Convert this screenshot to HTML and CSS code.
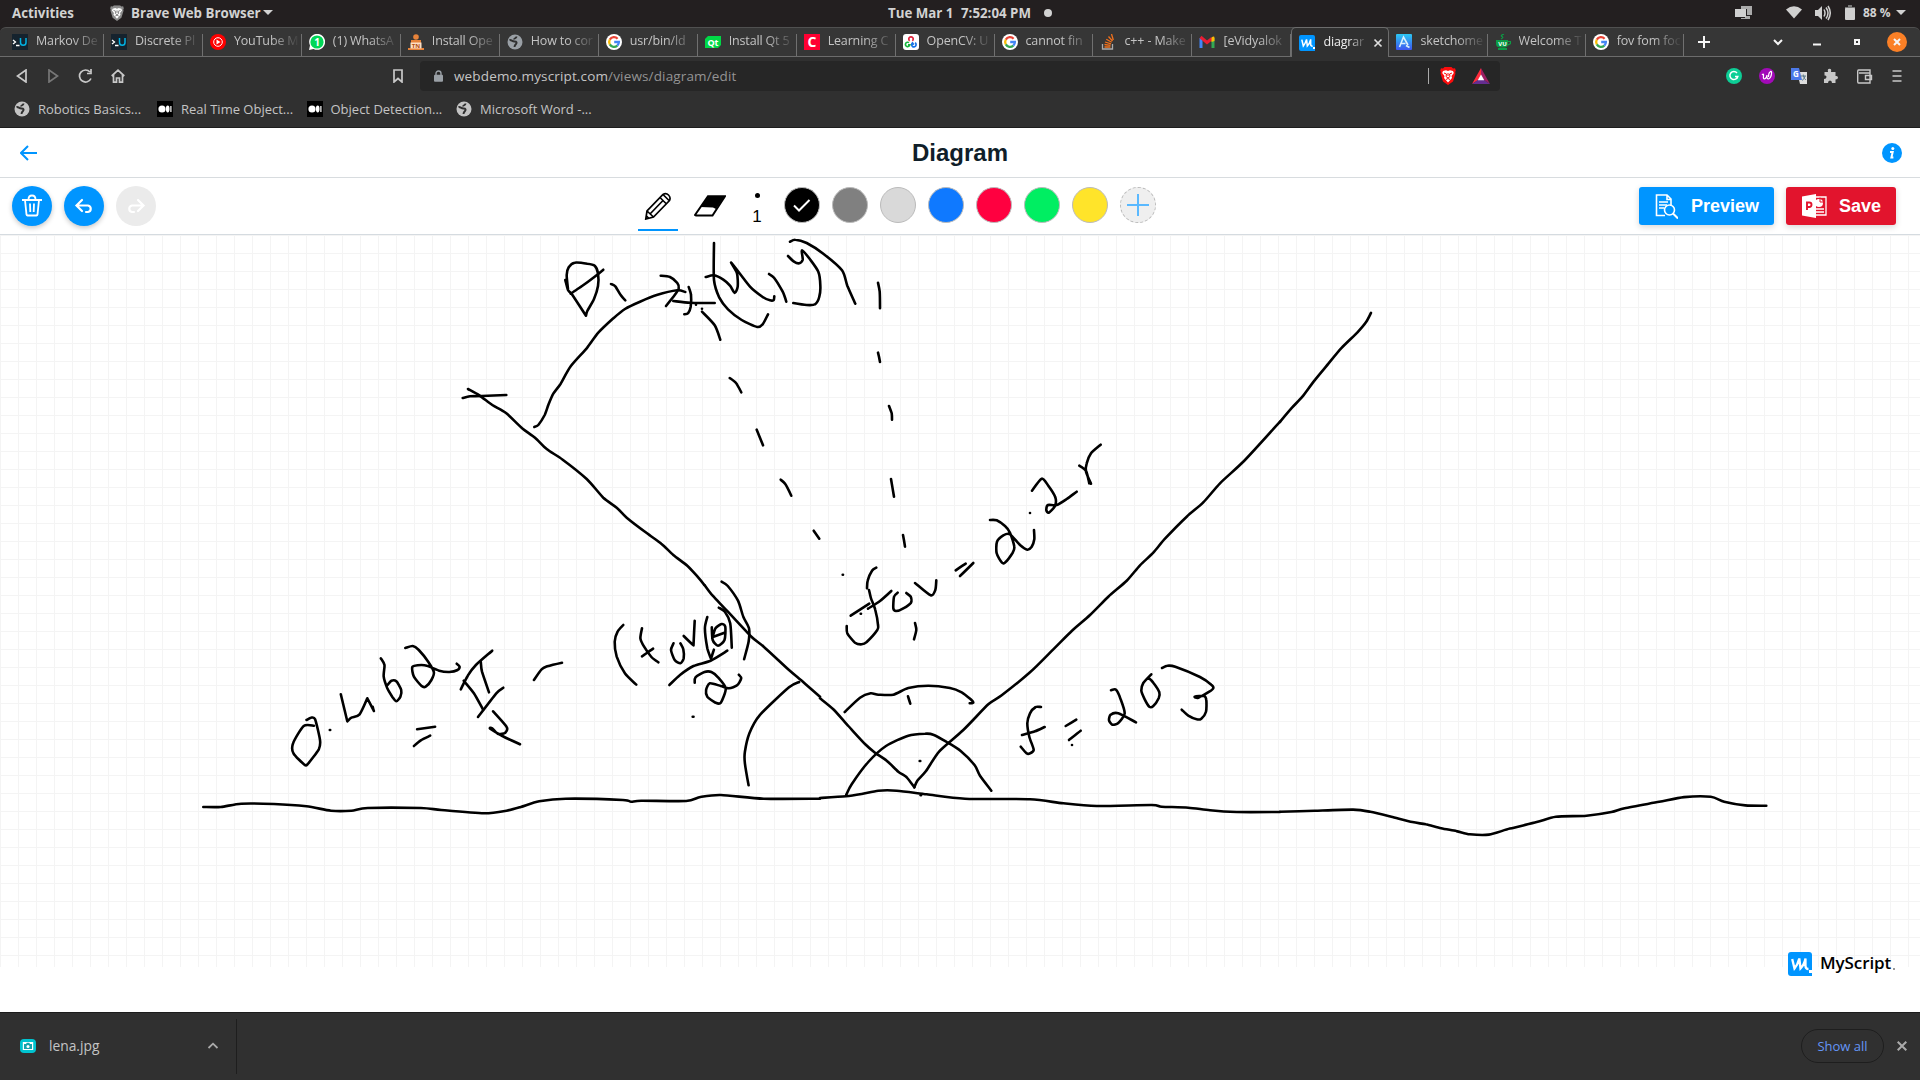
FILE: index.html
```html
<!DOCTYPE html>
<html lang="en">
<head>
<meta charset="utf-8">
<title>diagram</title>
<link rel="stylesheet" href="styles.css">
</head>
<body>
<svg class="defs" width="0" height="0" aria-hidden="true">
  <symbol id="google" viewBox="0 0 16 16"><circle cx="8" cy="8" r="8" fill="#fff"/><g fill="none" stroke-width="2.3"><path d="M11.6 4.7A4.9 4.9 0 0 0 3.8 5.6" stroke="#ea4335"/><path d="M3.8 5.6a4.9 4.9 0 0 0 0 4.8" stroke="#fbbc05"/><path d="M3.8 10.4a4.9 4.9 0 0 0 7.5 1.2" stroke="#34a853"/><path d="M11.3 11.6A4.9 4.9 0 0 0 12.9 8H8.2" stroke="#4285f4"/></g></symbol>
  <symbol id="globe" viewBox="0 0 16 16"><circle cx="8" cy="8" r="7.5" fill="currentColor"/><path d="M2.500 6c2-.5 2.500 1.500 5 1.500s2.500 1.500 1.500 2.500-1.500 1.500-1.500 3M9.500 2.500c0 2-2.500 1.500-2.500 3" fill="none" stroke="#303030" stroke-width="1.900"/></symbol>
  <symbol id="medium" viewBox="0 0 16 16"><path fill="#000" d="M0 0h16v16H0z"/><circle cx="5" cy="8" r="3.600" fill="#fff"/><ellipse cx="10.700" cy="8" rx="1.800" ry="3.400" fill="#fff"/><path d="M13.900 5v6" stroke="#fff" stroke-width="1.200"/></symbol>
  <symbol id="udacity" viewBox="0 0 16 16"><path fill="#15232e" d="M0 0h16v16H0z"/><path d="M1 6l2.500 2L1 10M4 11.500h3.500" fill="none" stroke="#fff" stroke-width="1.300"/><path d="M8.500 4v4.500a2.700 2.700 0 0 0 5.500 0V4" fill="none" stroke="#02b3e4" stroke-width="1.500"/></symbol>
  <symbol id="myscript" viewBox="0 0 24 24"><path fill="#0095ff" d="M3 0h18q3 0 3 3v21H3q-3 0-3-3V3q0-3 3-3z"/><path d="M4.200 7L6.500 16.500Q9.500 13 11.300 6.500L12.500 16.500Q16 13 17.500 6.500V14Q17.500 17 20.500 17" fill="none" stroke="#fff" stroke-width="2.300"/><path fill="#fff" d="M21 18h3v3h-3z"/></symbol>
  <symbol id="lion" viewBox="0 0 16 18"><path fill="currentColor" d="M4.500 0h7L13 1.500l2-.3.800 2.300-.600 1.500.300 1.500-2.500 8L8 18l-5-3.500-2.500-8L.8 5 .2 3.500 1 1.200l2 .3z"/><path fill="#fff" d="M3 4l3-.700L8 4l2-.7 3 .7.800 2-2.300 3 .5 2L8 15.500 4 11l.5-2-2.300-3z"/><path fill="none" stroke="var(--face)" stroke-width="1" d="M4 6l2.500 1-.5 2.500L8 11l2-1.500L9.500 7 12 6M8 6v3M6 12.500l2-1 2 1"/></symbol>
</svg>

<header class="system">
  <span class="activities">Activities</span>
  <svg class="sys-lion" viewBox="0 0 16 18"><use href="#lion"/></svg>
  <span class="app">Brave Web Browser</span>
  <i class="caret"></i>
  <span class="date">Tue Mar 1</span><span class="time">7:52:04 PM</span><i class="dot"></i>
  <div class="status">
    <svg width="17" height="14" viewBox="0 0 17 14"><path fill="#aaa" d="M6 0h11v9h-5V3H6zM10 10h5v3H6v-1h4z"/><path fill="#d0d0d0" d="M0 3h11v8H0z"/></svg>
    <svg width="16" height="13" viewBox="0 0 16 13"><path fill="#d0d0d0" d="M8 12.500L0 3.500Q8-3 16 3.500z"/></svg>
    <svg width="16" height="16" viewBox="0 0 16 16"><path fill="#d0d0d0" d="M0 5h3l4-4v14l-4-4H0z"/><path fill="none" stroke="#d0d0d0" stroke-width="1.500" d="M9 4.500q2 3.500 0 7M11 2.500q4 5.500 0 11M13 1q4.500 7 0 14"/></svg>
    <svg width="10" height="15" viewBox="0 0 10 15"><path fill="#777" d="M3 0h4v2h3v3H0V2h3z"/><rect y="3" width="10" height="12" rx="1" fill="#d0d0d0"/></svg>
    <span class="pct">88 %</span><i class="caret"></i>
  </div>
</header>

<nav class="tabs">
  <div class="tab"><svg><use href="#udacity"/></svg><span>Markov De</span></div>
  <div class="tab"><svg><use href="#udacity"/></svg><span>Discrete Pl</span></div>
  <div class="tab"><svg viewBox="0 0 16 16"><circle cx="8" cy="8" r="8" fill="#f00"/><circle cx="8" cy="8" r="4.300" fill="none" stroke="#fff"/><path fill="#fff" d="M6.500 5.500L10.500 8l-4 2.500z"/></svg><span>YouTube M</span></div>
  <div class="tab"><svg viewBox="0 0 16 16"><path fill="#fff" d="M0 16l1-4.500A8 8 0 1 1 4.500 15z"/><circle cx="8" cy="8" r="6.600" fill="#00d757"/><text x="8" y="11.500" text-anchor="middle" class="fav" font-size="10">1</text></svg><span>(1) WhatsA</span></div>
  <div class="tab"><svg viewBox="0 0 16 16"><circle cx="8" cy="3" r="2.800" fill="#e8833a"/><path fill="#e8833a" d="M3 6h10v8h3v2H0v-2h3z"/><path fill="#ffdfc5" d="M2.500 8.500h11v6h-11z"/><text x="8" y="14" text-anchor="middle" font-size="6" class="fav tn">TN</text></svg><span>Install Ope</span></div>
  <div class="tab"><svg class="gray"><use href="#globe"/></svg><span>How to cor</span></div>
  <div class="tab"><svg><use href="#google"/></svg><span>usr/bin/ld</span></div>
  <div class="tab"><svg viewBox="0 0 16 16"><path fill="#00d946" d="M3 2h13v9l-3 3H0V5z"/><text x="8" y="11.500" text-anchor="middle" font-size="9" class="fav">Qt</text></svg><span>Install Qt 5</span></div>
  <div class="tab"><svg viewBox="0 0 16 16"><path fill="#ff0032" d="M0 0h16v16H0z"/><text x="8" y="13" text-anchor="middle" font-size="14" class="fav">C</text></svg><span>Learning C</span></div>
  <div class="tab"><svg viewBox="0 0 16 16"><rect width="16" height="16" rx="3" fill="#fff"/><g fill="none" stroke-width="1.700"><path d="M6.700 6.800a2.200 2.200 0 1 1 2.600 0" stroke="#e0213a"/><path d="M6 8.700a2.200 2.200 0 1 0 .8 2.200H5" stroke="#15b53c"/><path d="M12 8.800a2.200 2.200 0 1 1-2.500.2l1.200 1.800" stroke="#1673e6"/></g></svg><span>OpenCV: U</span></div>
  <div class="tab"><svg><use href="#google"/></svg><span>cannot fin</span></div>
  <div class="tab"><svg viewBox="0 0 16 16"><path fill="none" stroke="#aaa" stroke-width="1.300" d="M2.500 10v5h10v-5"/><path fill="none" stroke="#f2711c" stroke-width="1.300" d="M4.500 13h6M4.500 10.500l6 .8M5 8l6 1.800M6.300 5.200l5.400 3M8.500 2.500l4 4.500M11.500 0l1.800 6"/></svg><span>c++ - Make</span></div>
  <div class="tab"><svg viewBox="0 0 16 16"><path fill="none" stroke="#4285f4" stroke-width="3" d="M2 14V4"/><path fill="none" stroke="#34a853" stroke-width="3" d="M14 14V4"/><path fill="none" stroke="#ea1d33" stroke-width="3" d="M1.500 3L8 8.500 13 4.500"/><path fill="#fbbc04" d="M12.500 3.500Q15.500 1.500 15.500 4v3l-3 1z"/></svg><span>[eVidyalok</span></div>
  <div class="tab active"><svg><use href="#myscript"/></svg><span>diagrar</span><svg class="x" viewBox="0 0 10 10"><path d="M1.500 1.500l7 7M8.500 1.500l-7 7"/></svg></div>
  <div class="tab narrow"><svg viewBox="0 0 16 16"><defs><linearGradient id="sk" x2="0" y2="1"><stop stop-color="#2cc8f2"/><stop offset="1" stop-color="#3d55f0"/></linearGradient></defs><rect width="16" height="16" rx="1" fill="url(#sk)"/><path d="M3.500 13L7.500 3l4.500 8M5 9.500h4.500M10 11.500l3.500 2" stroke="#d9eefc" fill="none" stroke-width="1.600"/></svg><span>sketchome</span></div>
  <div class="tab narrow"><svg viewBox="0 0 16 16"><path fill="#0c9c45" d="M1 6h12v4q0 3-3 3.500H5Q1 13 1 10zM3 14h9v2H3z"/><path d="M13 7.500h2.500v2L13 11M6 5q3-1.500 1-2.500T9 0" fill="none" stroke="#0c9c45" stroke-width="1.200"/><text x="7.500" y="11.500" text-anchor="middle" font-size="6" class="fav">VU</text></svg><span>Welcome T</span></div>
  <div class="tab narrow"><svg><use href="#google"/></svg><span>fov fom foc</span></div>
  <div class="controls">
    <svg width="12" height="12" viewBox="0 0 12 12"><path d="M6 0v12M0 6h12"/></svg>
    <svg width="10" height="8" viewBox="0 0 10 8"><path d="M1 2l4 4 4-4"/></svg>
    <svg width="8" height="12" viewBox="0 0 8 12"><path d="M0 8.500h8"/></svg>
    <svg width="6" height="6" viewBox="0 0 6 6"><path d="M1 1h4v4H1z"/></svg>
    <svg width="20" height="20" viewBox="0 0 20 20"><circle cx="10" cy="10" r="10" fill="#fb8026"/><path d="M7 7l6 6M13 7l-6 6"/></svg>
  </div>
</nav>

<div class="nav">
  <div class="nav-left">
    <svg width="12" height="14" viewBox="0 0 12 14"><path d="M10 1v12L1.500 7z"/></svg>
    <svg class="dim" width="12" height="14" viewBox="0 0 12 14"><path d="M2 1v12l8.500-6z"/></svg>
    <svg width="14" height="14" viewBox="0 0 14 14"><path d="M13 9.500A6 6 0 1 1 12 3M9 4.500h4V0"/></svg>
    <svg width="14" height="14" viewBox="0 0 14 14"><path d="M.7 7L7 1.200 13.300 7M2.500 6v7.200h3V9h3v4.200h3V6"/></svg>
  </div>
  <svg class="bm" width="10" height="14" viewBox="0 0 10 14"><path d="M1 1h8v12L5 9.500 1 13z"/></svg>
  <div class="url">
    <svg width="9" height="12" viewBox="0 0 9 12"><path d="M2 5V3.500a2.500 2.500 0 0 1 5 0V5" fill="none" stroke="#9aa0a6" stroke-width="1.400"/><rect y="4.700" width="9" height="7" rx="1" fill="#9aa0a6"/></svg>
    <span class="addr"><b>webdemo.myscript.com</b>/views/diagram/edit</span>
    <i class="sep"></i>
    <svg class="red" width="16" height="18"><use href="#lion"/></svg>
    <svg width="18" height="16" viewBox="0 0 18 16"><path fill="#ff2c3c" d="M9 0L0 16l9-6z"/><path fill="#9e1f63" d="M9 0l9 16-9-6z"/><path fill="#662d91" d="M0 16h18l-9-6z"/><path fill="#fff" d="M9 6.500l3.300 5.800H5.700z"/></svg>
  </div>
  <div class="ext">
    <svg viewBox="0 0 16 16"><circle cx="8" cy="8" r="8" fill="#0dce96"/><path d="M11 5a4 4 0 1 0 .8 3.500H9" fill="none" stroke="#fff" stroke-width="1.500"/></svg>
    <svg viewBox="0 0 16 16"><circle cx="8" cy="8" r="8" fill="#a20ab8"/><path d="M3 7q2-2 1.500 1T5.500 11q2-.5 2.500-4-.5 4 1.500 4Q12 10 12.500 6T11 4Q9.500 5 9.500 9" fill="none" stroke="#fff" stroke-width="1.200"/></svg>
    <svg viewBox="0 0 16 16"><path fill="#ddd" d="M6 4h10v12H9z"/><path fill="#4c79e8" d="M0 0h8l3 12H0z"/><text x="4.800" y="8.500" text-anchor="middle" font-size="8" class="fav">G</text><path d="M9.500 8H15M12.300 6.500V8q1.500 3.500 2.500 4M14 8q-.5 3-3 4.500" fill="none" stroke="#607d8b"/></svg>
    <svg viewBox="0 0 16 16"><path fill="#c8c8c8" d="M.5 4H4Q3.200.7 5.500.7T7 4h4.500v4q2.500-.5 2.500 1.500t-2.500 2V15H8q0-2.500-2-2.500T4 15H0v-4q2.500 0 2.500-2T.5 7.500z"/></svg>
    <svg viewBox="0 0 16 16"><path d="M13 4.500V2H1.500Q.7 2 .7 3.500v10Q.7 15 1.500 15H13V5H2M14.500 7.500H8.500v4h6z" fill="none" stroke="#c8c8c8" stroke-width="1.400"/></svg>
    <svg viewBox="0 0 16 16"><path d="M3.500 3h9M3.500 8h9M3.500 13h9" stroke="#c8c8c8" stroke-width="1.500"/></svg>
  </div>
</div>

<div class="bookmarks">
  <a><svg><use href="#globe"/></svg>Robotics Basics...</a>
  <a><svg><use href="#medium"/></svg>Real Time Object...</a>
  <a><svg><use href="#medium"/></svg>Object Detection...</a>
  <a><svg><use href="#globe"/></svg>Microsoft Word -...</a>
</div>

<main>
  <div class="title">
    <svg width="18" height="16" viewBox="0 0 18 16"><path d="M17 8H1M8 1L1 8l7 7" fill="none" stroke="#0095ff" stroke-width="2"/></svg>
    <h1>Diagram</h1>
    <svg width="20" height="20" viewBox="0 0 20 20"><circle cx="10" cy="10" r="10" fill="#0095ff"/><circle cx="10.800" cy="5.600" r="1.500" fill="#fff"/><path d="M8 9h2.700L9.400 14.600h2" fill="none" stroke="#fff" stroke-width="2"/></svg>
  </div>
  <div class="tools">
    <div class="history">
      <button class="round"><svg viewBox="0 0 40 40"><path d="M10 14h20M16.500 13.500q0-4 3.500-4t3.500 4M13 14l1.500 14.500q.2 1 1 1h9q.8 0 1-1L27 14M18 17.500l.3 8.500M22 17.500l-.3 8.500" fill="none" stroke="#fff" stroke-width="1.800"/></svg></button>
      <button class="round"><svg viewBox="0 0 40 40"><path d="M18 14l-5.500 5.500L18 25M13 19.500h11a3.300 3.300 0 0 1 0 6.500h-2" fill="none" stroke="#fff" stroke-width="2.200" stroke-linecap="round"/></svg></button>
      <button class="round off"><svg viewBox="0 0 40 40"><path d="M22 14l5.500 5.500L22 25M27 19.500H16a3.300 3.300 0 0 0 0 6.500h2" fill="none" stroke="#fff" stroke-width="2.200" stroke-linecap="round"/></svg></button>
    </div>
    <div class="pens">
      <div class="pen"><svg width="28" height="28" viewBox="0 0 28 28"><path d="M1.800 27l1.200-8L19 2.500q3-2 5.500.5T25.500 8.500L9.500 25zM3 19l6.500 6M16 5.500l6 6M6 22L19.500 8M19 2.500l6 6M2.500 24l2.500 2.500" fill="none" stroke="#000" stroke-width="1.700"/></svg></div>
      <svg class="eraser" width="32" height="22" viewBox="0 0 32 22"><path d="M1 20L14 1.200h17L18.500 20.500H2z" fill="#fff" stroke="#000" stroke-width="2"/><path d="M6.500 12L14 1h17l-9 13-3-1.500z"/></svg>
      <div class="size"><i></i><span>1</span></div>
      <div class="swatches">
        <i class="c-black"><svg viewBox="0 0 34 34"><path d="M9 17.500l5 5L24.500 12" fill="none" stroke="#fff" stroke-width="2"/></svg></i><i class="c-gray"></i><i class="c-light"></i><i class="c-blue"></i><i class="c-red"></i><i class="c-green"></i><i class="c-yellow"></i><i class="c-add"><svg viewBox="0 0 34 34"><path d="M17 6v22M6 17h22" stroke="#5ab9ff" stroke-width="2"/></svg></i>
      </div>
    </div>
    <div class="actions">
      <button class="btn preview"><svg width="24" height="26" viewBox="0 0 24 26"><path d="M11 22.500H2.500V2H13l4 4v7M13 2v4.500h4M5 9h9M5 12h8M5 15h5" fill="none" stroke="#fff" stroke-width="1.600"/><circle cx="15.500" cy="17" r="5" fill="none" stroke="#fff" stroke-width="1.600"/><path d="M19 20.500l5 5" stroke="#fff" stroke-width="2"/></svg><span>Preview</span></button>
      <button class="btn save"><svg width="25" height="24" viewBox="0 0 25 24"><path d="M12 3h12v18H12M14 15h8M14 18h8" fill="none" stroke="#fff" stroke-width="1.300"/><circle cx="17" cy="9" r="4" fill="#fff"/><path d="M18 3.500V8h4.500" stroke="#e2142d" fill="none"/><path fill="#fff" d="M0 2.500L14 0v24L0 21.500z"/><path d="M5 16V8.500h2.200q2.300 0 2.300 2.200T7.200 13H5" fill="none" stroke="#e2142d" stroke-width="1.900"/></svg><span>Save</span></button>
    </div>
  </div>
  <section class="canvas">
    <svg id="ink" viewBox="0 235 1920 732" width="1920" height="732"></svg>
  </section>
  <footer class="brand"><svg width="24" height="24"><use href="#myscript"/></svg><span>MyScript</span><i></i></footer>
</main>

<div class="shelf">
  <div class="file">
    <svg width="16" height="14" viewBox="0 0 16 14"><rect width="16" height="14" rx="4" fill="#00c3cf"/><rect x="2.800" y="3" width="10.400" height="8" fill="#fff"/><path fill="#16a3ad" d="M4 5h2l.8-1.300h2.500L10 5h2v5H4z"/><circle cx="8" cy="7.500" r="1.500" fill="#fff"/></svg>
    <span>lena.jpg</span>
    <svg width="12" height="8" viewBox="0 0 12 8"><path d="M1.500 6L6 1.700 10.500 6" fill="none" stroke="#aaa" stroke-width="1.800"/></svg>
  </div>
  <div class="shelf-right"><button class="all">Show all</button><svg width="10" height="10" viewBox="0 0 10 10"><path d="M.7.7l8.600 8.600M9.300.7L.7 9.300" stroke="#aaa" stroke-width="2"/></svg></div>
</div>
<script src="ink.js"></script>
</body>
</html>
```
FILE: styles.css
```css
* { box-sizing: border-box; }
body { margin: 0; width: 1920px; height: 1080px; overflow: hidden; display: flex; flex-direction: column; background: #fff; color: #c4c4c4; font: 13px/16px "Open Sans", "Noto Sans", sans-serif; }
svg { flex: none; display: block; }
button { border: 0; padding: 0; font: inherit; }
.defs { position: absolute; }
i { display: block; flex: none; }

.system { height: 27px; flex: none; background: #231f20; display: flex; align-items: center; padding: 0 14px 2px 12px; font-weight: 700; color: #d2d2d2; white-space: nowrap; font-size: 13.300px; }
.activities { width: 98px; }
.sys-lion { width: 14px; height: 16px; color: #8b8b8b; --face: #777; margin-right: 7px; }
.app { width: 132px; }
.caret { border: 5px solid transparent; border-top-color: #d2d2d2; border-bottom: 0; }
.date { margin-left: 615px; width: 73px; }
.time { width: 83px; }
.dot { width: 8px; height: 8px; border-radius: 50%; background: #d2d2d2; }
.status { margin-left: auto; display: flex; align-items: center; }
.status svg:nth-child(1) { margin-right: 34px; }
.status svg:nth-child(2) { margin-right: 13px; }
.status svg:nth-child(3) { margin-right: 14px; }
.status svg:nth-child(4) { margin-right: 8px; }
.pct { width: 33px; font-size: 12px; }

.tabs { height: 30px; flex: none; background: #363636; border-top: 1px solid #505050; border-bottom: 1px solid #6c6c6c; display: flex; padding-left: 5px; border-radius: 6px 6px 0 0; box-shadow: 0 -6px 0 #231f20; }
.tab { width: 98.960px; flex: none; display: flex; align-items: center; padding: 0 2px 0 7px; position: relative; font-size: 12.500px; letter-spacing: -.15px; }
.tab.narrow { width: 98.100px; }
.tab::after { content: ""; position: absolute; right: 0; top: 6px; bottom: 0; width: 1px; background: #707070; }
.tab svg { width: 16px; height: 16px; margin-right: 8px; }
.tab span { flex: 1; overflow: hidden; white-space: nowrap; margin-top: -2px; -webkit-mask-image: linear-gradient(90deg, #000 55%, transparent); mask-image: linear-gradient(90deg, #000 55%, transparent); }
.tab.active { width: 98.100px; height: 30px; background: #303030; border: 1px solid #6c6c6c; border-bottom: 0; border-radius: 5px 5px 0 0; margin-top: -1px; }
.tab.active::after { display: none; }
.tab.active span { color: #eee; }
.tab .x { width: 10px; height: 10px; margin: 0 3px 0 5px; stroke: #ddd; stroke-width: 1.700; }
.gray { color: #9aa0a6; }
.fav { fill: #fff; font-family: "Open Sans", sans-serif; font-weight: 700; letter-spacing: 0; }
.fav.tn { fill: #b04d10; }
.controls { display: flex; align-items: center; margin-left: 14px; }
.controls path { fill: none; stroke: #f5f5f5; stroke-width: 2; }
.controls svg:nth-child(1) { margin-right: 63px; }
.controls svg:nth-child(2) { margin-right: 30px; }
.controls svg:nth-child(3) { margin-right: 33px; }
.controls svg:nth-child(4) { margin-right: 27px; }

.nav { height: 38px; flex: none; background: #303030; display: flex; align-items: center; }
.nav-left { display: flex; align-items: center; gap: 19px; margin-left: 16px; }
.nav-left svg, .bm { fill: none; stroke: #c8c8c8; stroke-width: 1.700; }
.nav-left .dim { stroke: #777; }
.bm { margin-left: 268px; }
.url { margin-left: 17px; width: 1080px; height: 30px; background: #262626; border-radius: 4px; display: flex; align-items: center; padding-left: 14px; font-size: 13.500px; color: #949494; }
.addr { margin-left: 11px; flex: 1; letter-spacing: .15px; }
.addr b { font-weight: 400; color: #c4c4c4; }
.sep { width: 1px; height: 16px; background: #aaa; }
.red { color: #fb0d0d; --face: #fb0d0d; margin: 0 16px 0 11px; }
.red + svg { margin-right: 10px; }
.ext { display: flex; gap: 16.700px; margin-left: 226px; }
.ext svg { width: 16px; height: 16px; }

.bookmarks { height: 33px; flex: none; background: #303030; border-bottom: 1px solid #1d1d1d; display: flex; padding: 0 14px; white-space: nowrap; }
.bookmarks a { display: flex; align-items: center; height: 27px; width: 149.500px; }
.bookmarks a:first-child { width: 143px; }
.bookmarks svg { width: 16px; height: 16px; margin-right: 8px; }

main { flex: 1; background: #fff; color: #101e29; font-family: "Liberation Sans", Arial, sans-serif; }
.title { height: 50px; border-bottom: 1px solid #d8dcdf; display: flex; align-items: center; justify-content: space-between; padding: 0 18px 0 20px; }
h1 { margin: 0; font-size: 24px; line-height: 28px; }
.tools { height: 57px; border-bottom: 1px solid #d5dbe0; display: flex; justify-content: space-between; align-items: flex-start; padding: 8px 24px 0 12px; }
.history { display: flex; gap: 12px; width: 626px; }
.round { width: 40px; height: 40px; border-radius: 50%; background: #0095ff; box-shadow: 0 2px 5px rgba(0,0,0,.22); }
.round.off { background: #ebebeb; box-shadow: none; }
.pens { display: flex; flex: 1; }
.pen { width: 40px; height: 45px; border-bottom: 2px solid #0095ff; padding: 6px 6px 0; }
.eraser { margin: 9px 0 0 16px; }
.size { width: 24px; margin: 7px 15px 0 19px; text-align: center; font-size: 17px; color: #000; }
.size i { width: 5px; height: 5px; margin: 0 auto 11px; border-radius: 50%; background: #000; }
.swatches { display: flex; gap: 12px; margin-top: 1px; }
.swatches i { width: 36px; height: 36px; border-radius: 50%; border: 1px solid #bbb; }
.c-black { background: #000; } .c-gray { background: #808080; } .c-light { background: #d9d9d9; } .c-blue { background: #0f79ff; }
.c-red { background: #ff0040; } .c-green { background: #00ee62; } .c-yellow { background: #ffe42a; }
.swatches .c-add { background: #efefef; border-style: dashed; }
.actions { display: flex; gap: 12px; margin-top: 1px; }
.btn { height: 38px; border-radius: 3px; color: #fff; font-weight: 700; font-size: 18px; display: flex; align-items: center; box-shadow: 0 2px 6px rgba(0,0,0,.16); }
.preview { width: 135px; background: #0095ff; padding-left: 15px; }
.save { width: 110px; background: #e2142d; padding-left: 16px; }
.btn span { margin-left: 12px; }
.preview span { margin-left: 13px; }
.canvas { height: 732px; background-image: linear-gradient(#f4f4f4 1px, transparent 1px), linear-gradient(90deg, #f4f4f4 1px, transparent 1px); background-size: 18px 18px; }
#ink path { fill: none; stroke: #000; stroke-width: 2.600; stroke-linecap: round; stroke-linejoin: round; }
.brand { position: absolute; left: 1788px; top: 952px; height: 24px; display: flex; align-items: center; gap: 8px; color: #000; }
.brand span { font: 600 17px/24px "Open Sans", sans-serif; letter-spacing: -.1px; margin-top: -2px; }
.brand i { width: 2px; height: 2px; background: #999; margin: 10px 0 0 -6px; }

.shelf { height: 68px; flex: none; background: #303030; border-top: 1px solid #1c1c1c; display: flex; align-items: center; justify-content: space-between; font-size: 13.800px; padding-bottom: 1px; }
.file { height: 55px; width: 237px; border-right: 1px solid #1e1e1e; padding-left: 20px; display: flex; align-items: center; }
.file span { width: 158px; margin-left: 13px; }
.shelf-right { display: flex; align-items: center; padding-right: 13px; gap: 13px; }
.all { width: 83px; height: 34px; border: 1px solid #1e1e1e; border-radius: 17px; background: none; color: #6596f5; font-size: 13px; font-weight: 500; }
```
FILE: ink.js
```js
const groups = [
  { o: [440, 225], s: [1 / 3, 1 / 3], strokes: [
    "84,492 118,511 157,540 198,564 248,611 285,638 320,672 368,704 440,762 490,818 530,848 560,878 620,924 664,956 700,990 742,1022 770,1052 793,1080",
    "68,519 90,514 125,513 199,510",
    "283,606 295,600 314,570 325,540 340,506 362,476 392,424 440,370 475,323 520,280 555,252 600,230 650,210 712,196 736,201",
    "376,165 384,195 394,205|394,205 438,272|438,272 442,258 462,222 474,183 474,145 464,122 442,116 404,113 386,127 380,150 384,192",
    "392,206 425,184 463,156 490,134",
    "513,177 526,184 542,210 556,226",
    "662,152 690,156 712,174 716,190 704,210 678,243",
    "746,186 753,210 752,245 744,265 733,268",
    "700,228 750,233 824,234",
    "822,54 822,165 838,218 864,253 905,285 952,306 968,298 984,268",
    "797,156 822,151 850,164 870,182 884,204 893,185 891,145 874,113 930,185 968,216 990,226 1001,225 1003,214",
    "987,147 1002,158 1028,200 1039,230",
    "1044,93 1062,110 1078,115 1088,104 1086,76 1110,103 1135,140 1141,180 1138,215 1125,238 1100,240 1060,234",
    "1050,50 1066,44 1100,54 1150,86 1206,136 1222,182 1246,236",
    "1314,173 1319,200 1320,250", "1314,383 1320,411",
    "786,260 824,301 841,344", "869,459 888,474 904,502", "950,614 969,661", "1022,764 1036,777 1054,812", "1121,917 1138,941",
    "1347,543 1355,565 1356,584", "1353,762 1362,815", "1389,930 1395,965",
    "786,251 786,251", "768,239 768,239", "1208,1049 1209,1049"
  ] },
  { o: [800, 420], s: [1 / 3, 1 / 3], strokes: [
    "60,835 100,868 145,918 195,972 225,998 260,1022 295,1055 320,1072 343,1102",
    "343,1102 352,1082 378,1053 418,994 490,930 565,853 605,826 690,757 760,688 816,632 870,585 925,530 980,482 1020,436 1060,398 1095,356 1160,290 1210,247 1260,190 1335,120 1440,5",
    "60,1134 138,1129 185,1122 235,1112 290,1112 380,1123 495,1136 690,1138 790,1150 890,1158 1055,1155 1085,1160 1165,1163 1230,1171 1310,1176 1440,1176",
    "134,876 180,833 212,820 235,824 280,824 325,804 385,797 450,804 485,817 512,838 520,848 509,850",
    "139,1124 155,1093 205,1026 258,978 325,947 375,941 400,944 440,966 482,993 524,1036 540,1067 574,1112",
    "324,829 331,851", "345,609 349,630 342,658",
    "229,443 216,452 203,482 201,505|207,510 213,535 226,570 234,615 232,630 200,666 185,673 165,668 142,640 140,618",
    "152,587 208,551", "204,566 240,543 274,513",
    "293,518 282,530 280,565 288,573 310,565 333,548 332,530 319,519",
    "345,489 392,526 406,510 409,481", "467,451 497,431", "480,468 520,429",
    "570,300 590,301 615,318 630,338 643,380 638,398 616,427 606,428 590,400 591,365 610,346 630,343 660,375 682,389 695,380 703,358 702,330",
    "696,212 725,176 745,197 766,232 765,258 746,278 739,270 744,255 770,255 800,237 830,215",
    "902,74 873,100 860,130 858,155 873,191|838,137 858,153 868,190",
    "723,861 707,861 690,880 682,910 688,950 701,989 690,1000 680,1000 662,980", "666,945 705,934 734,921", "797,918 829,899", "807,960 842,932",
    "933,811 948,809 961,835 974,880 955,909 937,914 927,901 932,884 955,880 1008,907",
    "1054,763 1030,789 1024,812 1034,838 1048,860 1060,858 1076,835 1078,817 1060,788 1045,773",
    "1086,744 1102,737 1126,740 1200,771 1234,794 1240,805 1228,815 1195,833 1184,830 1212,828 1219,840 1218,875 1204,896 1190,898 1165,887 1145,869",
    "182,581 183,581", "690,279 690,279", "359,1023 361,1023", "362,1126 363,1126", "816,975 816,975"
  ] },
  { o: [180, 560], s: [1 / 2.45, 1 / 3], strokes: [
    "1285,75 1305,107 1340,152 1400,230 1430,260 1492,330 1522,361 1568,410",
    "57,741 100,741 150,731 230,732 310,739 370,752 420,752 460,744 590,744 640,750 745,760 800,752 835,741 880,724 945,716 1085,720 1105,725 1130,722 1240,723 1275,711 1325,705 1430,716 1568,716",
    "310,480 321,473 331,478 343,540 340,568 313,612 305,614 278,580 277,550 303,498 328,497",
    "367,510 368,510", "394,403 410,484|410,484 420,473 440,463 459,415|459,415 475,453|472,440 475,453",
    "492,295 501,315 499,350 508,385 520,410 530,424 540,410 542,390 530,364 518,362 509,374",
    "552,264 570,258 585,270 608,305 622,337 616,360 602,380 592,378 573,350 569,322 582,316 605,317 635,332 660,336 680,330 685,320 678,311",
    "581,508 625,500", "573,558 590,541 613,527",
    "765,272 725,315 705,347 688,388", "695,362 720,400 742,448", "737,306 740,335 757,397", "792,383 775,400 730,471",
    "767,454 800,500 797,518 780,522 765,505 760,506 790,528 833,553",
    "867,360 886,328 900,319 936,308",
    "1086,195 1072,215 1065,245 1070,290 1090,340 1118,374",
    "1132,205 1128,235 1137,260 1155,291 1172,307", "1132,289 1159,266",
    "1209,250 1203,270 1212,300 1226,310 1234,295 1233,268 1226,250",
    "1234,228 1258,256|1258,256 1261,182", "1292,171 1286,205 1292,265 1301,296|1301,296 1308,269",
    "1303,202 1305,240 1318,257 1334,240 1336,200 1327,192 1312,205 1304,235|1307,230 1334,218",
    "1320,143 1335,155 1348,190 1352,263", "1327,65 1342,78 1367,122 1380,170 1394,205 1393,245 1382,298",
    "1199,375 1225,345 1258,318 1300,302 1341,272",
    "1261,368 1263,352 1285,336 1302,336 1318,352 1337,385 1325,428 1312,428 1292,410 1289,390 1298,370 1325,378 1345,385 1365,376 1375,355 1369,344",
    "1517,366 1492,382 1420,466 1395,520 1384,575 1384,610 1393,676", "1256,470 1258,470"
  ] },
  { o: [1200, 290], s: [600 / 1568, 1 / 2.8], strokes: [
    "209,369 240,330 268,298 298,255 335,207 370,162 412,118 434,90 447,64",
    "209,1461 300,1458 400,1455 445,1461 500,1475 555,1490 590,1496 630,1507 670,1515 705,1524 755,1525 810,1508 880,1490 930,1475 1010,1472 1075,1462 1110,1451 1200,1433 1265,1420 1335,1419 1370,1433 1425,1443 1480,1444"
  ] }
];

function smooth(points) {
  const f = n => n.toFixed(1);
  let d = `M${f(points[0][0])} ${f(points[0][1])}`;
  for (let i = 0; i < points.length - 1; i++) {
    const a = points[i - 1] || points[i], b = points[i], c = points[i + 1], e = points[i + 2] || c;
    const c1 = [b[0] + (c[0] - a[0]) / 8, b[1] + (c[1] - a[1]) / 8];
    const c2 = [c[0] - (e[0] - b[0]) / 8, c[1] - (e[1] - b[1]) / 8];
    d += `C${[...c1, ...c2, ...c].map(f).join(" ")}`;
  }
  return d;
}

const ink = document.getElementById("ink");
for (const { o, s, strokes } of groups) {
  for (const stroke of strokes) {
    const path = document.createElementNS("http://www.w3.org/2000/svg", "path");
    path.setAttribute("d", stroke.split("|").map(part => smooth(part.split(" ").map(p => {
      const [x, y] = p.split(",").map(Number);
      return [o[0] + x * s[0], o[1] + y * s[1]];
    }))).join(""));
    ink.append(path);
  }
}
```
